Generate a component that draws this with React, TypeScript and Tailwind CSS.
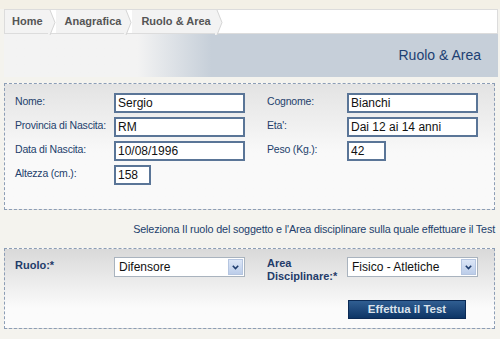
import React from "react";

const crumbs = ["Home", "Anagrafica", "Ruolo & Area"];

const Chevron = () => (
  <svg width="8" height="25" viewBox="0 0 8 25" className="block shrink-0">
    <polygon points="0,0 2,0 7,12.5 2,25 0,25" fill="#f3f3f3" />
    <polyline points="2,0 7,12.5 2,25" fill="none" stroke="#d4d4d4" strokeWidth="1" />
  </svg>
);

const Field = ({ label, value, w }: { label: string; value: string; w: string }) => (
  <div className="flex h-[20px] items-start">
    <div className="w-[99px] shrink-0 pt-[2px] text-[10.5px] leading-[13px] tracking-[-0.2px] text-[#233f6c]">{label}</div>
    <div
      className={`${w} flex h-[20px] items-center border-2 border-[#5a7597] bg-white pl-[2px] text-[12px] text-[#111]`}
    >
      {value}
    </div>
  </div>
);

const Select = ({ value }: { value: string }) => (
  <div className="flex h-[20px] w-[131px] items-center justify-between border border-[#a9b3be] bg-white pl-[4px] text-[12px] text-[#111]">
    <span>{value}</span>
    <span className="mr-[1px] flex h-[16px] w-[15px] items-center justify-center border border-[#b5c5e0] bg-gradient-to-b from-[#dce6f7] to-[#bccde9]">
      <svg width="7" height="5" viewBox="0 0 7 5">
        <polyline points="0.8,0.8 3.5,3.6 6.2,0.8" fill="none" stroke="#1e3c6e" strokeWidth="1.6" />
      </svg>
    </span>
  </div>
);

export default function App() {
  return (
    <div className="h-[339px] w-[500px] overflow-hidden bg-[#f4f3ee] font-['Liberation_Sans',Arial,sans-serif]">
      <div className="h-[9px] bg-[#f3f0e6]" />
      <div className="ml-[4px] w-[494px]">
        {/* breadcrumb */}
        <div className="flex h-[25px] items-stretch border border-[#dcdcdc] bg-white text-[11px] font-bold text-[#555]">
          {crumbs.map((c, i) => (
            <React.Fragment key={c}>
              <div
                className={`flex items-center bg-[#f3f3f3] ${i === 0 ? "pl-[7px] pr-[5px]" : i === 1 ? "pl-[9px] pr-[3px]" : "pl-[9px] pr-[4px]"}`}
              >
                {c}
              </div>
              <Chevron />
            </React.Fragment>
          ))}
        </div>
        {/* title band */}
        <div className="flex h-[43px] items-center justify-end bg-gradient-to-r from-[#f3f3f3] from-[27%] to-[#c6cfd9] to-[42%] pr-[17px] text-[14px] text-[#1d3f73]">
          Ruolo &amp; Area
        </div>
      </div>

      <div className="mt-[6px] ml-[4px] w-[491px]">
        {/* anagrafica */}
        <div className="flex h-[127px] gap-[22px] border border-dashed border-[#8c9db5] bg-gradient-to-b from-[#e3e3e3] to-[#f9f9f9] to-[55%] pl-[10px] pt-[9px]">
          <div className="flex flex-col gap-[4px]">
            <Field label="Nome:" value="Sergio" w="w-[131px]" />
            <Field label="Provincia di Nascita:" value="RM" w="w-[131px]" />
            <Field label="Data di Nascita:" value="10/08/1996" w="w-[131px]" />
            <Field label="Altezza (cm.):" value="158" w="w-[37px]" />
          </div>
          <div className="flex flex-col gap-[4px] [&>div>div:first-child]:w-[80px]">
            <Field label="Cognome:" value="Bianchi" w="w-[131px]" />
            <Field label="Eta':" value="Dai 12 ai 14 anni" w="w-[131px]" />
            <Field label="Peso (Kg.):" value="42" w="w-[39px]" />
          </div>
        </div>

        <div className="flex h-[38px] items-center justify-end whitespace-nowrap text-[10.8px] tracking-[-0.15px] text-[#233f6c]">
          Seleziona Il ruolo del soggetto e l'Area disciplinare sulla quale effettuare il Test
        </div>

        {/* ruolo & area */}
        <div className="h-[81px] border border-dashed border-[#8c9db5] bg-gradient-to-b from-[#d9d9d9] to-[#fbfbfb] to-[75%] pl-[10px] pt-[8px]">
          <div className="flex gap-[22px]">
            <div className="flex w-[230px] items-start">
              <div className="w-[99px] pt-[2px] text-[11px] font-bold leading-[13px] text-[#1f3c6a]">Ruolo:*</div>
              <Select value="Difensore" />
            </div>
            <div className="flex items-start">
              <div className="w-[80px] text-[11px] font-bold leading-[13px] text-[#1f3c6a]">
                Area
                <br />
                Disciplinare:*
              </div>
              <Select value="Fisico - Atletiche" />
            </div>
          </div>
          <div className="mt-[17px] flex justify-end pr-[28px]">
            <button className="flex h-[19px] w-[118px] items-center justify-center border border-[#0b2a55] bg-gradient-to-b from-[#305e92] to-[#0d3566] text-[11.5px] font-bold text-[#dbe3ec]">
              Effettua il Test
            </button>
          </div>
        </div>
      </div>
    </div>
  );
}
